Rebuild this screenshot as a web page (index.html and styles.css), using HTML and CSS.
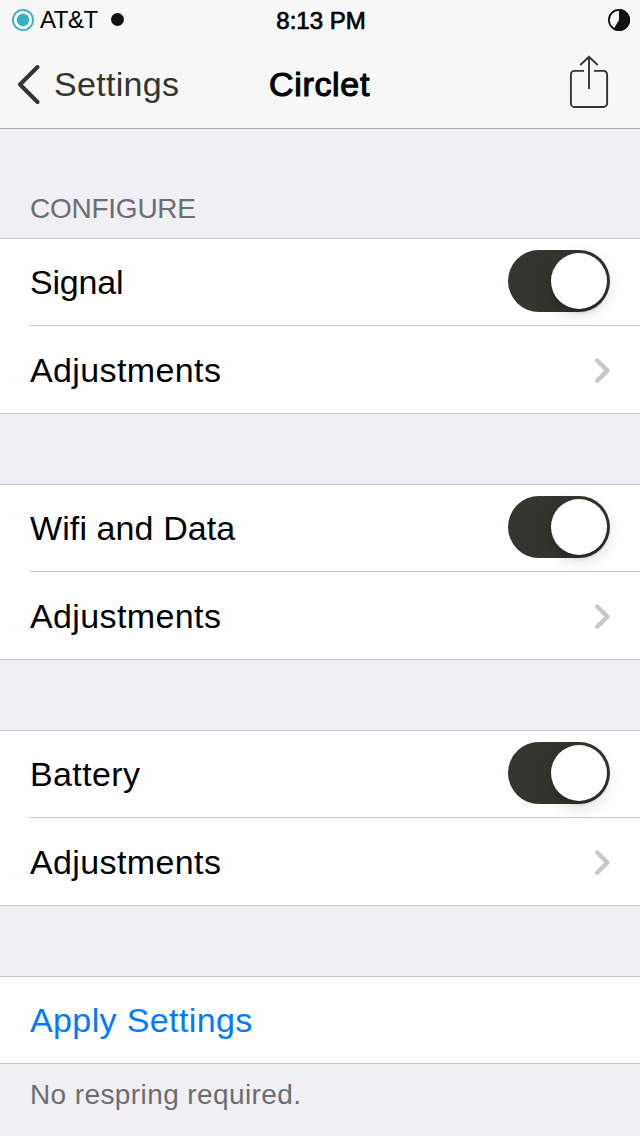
FILE: index.html
```html
<!DOCTYPE html>
<html lang="en">
<head>
<meta charset="utf-8">
<title>Circlet</title>
<link rel="stylesheet" href="styles.css">
</head>
<body>
<header class="top">
  <div class="status">
    <div class="carrier">
      <svg class="signal" width="24" height="24" viewBox="0 0 24 24"><circle cx="12" cy="12" r="10.1" fill="none" stroke="#34aec9" stroke-width="1.8"/><circle cx="12" cy="12" r="6.2" fill="#34aec9"/></svg>
      <span class="carrier-name">AT&amp;T</span>
      <span class="data-dot"></span>
    </div>
    <time class="clock">8:13 PM</time>
    <svg class="battery" width="24" height="24" viewBox="0 0 24 24"><circle cx="12" cy="12" r="10.1" fill="none" stroke="#111" stroke-width="1.8"/><path d="M12 1A11 11 0 1 1 6.300 21.400L12 12Z" fill="#111"/></svg>
  </div>
  <nav class="nav">
    <a class="back">
      <svg width="24" height="40" viewBox="0 0 24 40"><path d="M21.500 3L4 20.500L21.500 38" fill="none" stroke="#34352e" stroke-width="4" stroke-linecap="round" stroke-linejoin="round"/></svg>
      <span class="back-label">Settings</span>
    </a>
    <h1 class="title">Circlet</h1>
    <svg class="share" width="40" height="54" viewBox="0 0 40 54"><path d="M15 15.9H5.500A3.600 3.600 0 0 0 1.900 19.500V48.400A3.600 3.600 0 0 0 5.500 52H34.500A3.600 3.600 0 0 0 38.100 48.400V19.500A3.600 3.600 0 0 0 34.500 15.900H25M20 34V2M11.300 10L20 1.800L28.700 10" fill="none" stroke="#34352e" stroke-width="1.9"/></svg>
  </nav>
</header>
<main class="settings">
  <h2 class="heading">CONFIGURE</h2>
  <section class="group">
    <div class="row"><span class="signal-label">Signal</span><span class="switch"><span class="knob"></span></span></div>
    <div class="row link"><span class="adjust">Adjustments</span><svg class="chevron" width="16" height="26" viewBox="0 0 16 26"><path d="M3.200 2.500L13.400 12.600L3.200 22.700" fill="none" stroke="#c7c7cc" stroke-width="4.300" stroke-linecap="round" stroke-linejoin="round"/></svg></div>
  </section>
  <section class="group">
    <div class="row"><span class="wifi-label">Wifi and Data</span><span class="switch"><span class="knob"></span></span></div>
    <div class="row link"><span class="adjust">Adjustments</span><svg class="chevron" width="16" height="26" viewBox="0 0 16 26"><path d="M3.200 2.500L13.400 12.600L3.200 22.700" fill="none" stroke="#c7c7cc" stroke-width="4.300" stroke-linecap="round" stroke-linejoin="round"/></svg></div>
  </section>
  <section class="group">
    <div class="row"><span class="battery-label">Battery</span><span class="switch"><span class="knob"></span></span></div>
    <div class="row link"><span class="adjust">Adjustments</span><svg class="chevron" width="16" height="26" viewBox="0 0 16 26"><path d="M3.200 2.500L13.400 12.600L3.200 22.700" fill="none" stroke="#c7c7cc" stroke-width="4.300" stroke-linecap="round" stroke-linejoin="round"/></svg></div>
  </section>
  <section class="group">
    <div class="row apply">Apply Settings</div>
  </section>
  <p class="note">No respring required.</p>
</main>
</body>
</html>
```

FILE: styles.css
```css
* { box-sizing: border-box; }
body {
  margin: 0;
  height: 1136px;
  overflow: hidden;
  background: #efeff4;
  color: #000;
  font-family: "Liberation Sans", Arial, sans-serif;
  font-size: 34px;
}
svg { display: block; flex: none; }
.top {
  height: 129px;
  background: #f7f7f7;
  border-bottom: 1px solid #a9a9b0;
}
.status, .nav {
  display: grid;
  grid-template-columns: 1fr auto 1fr;
  align-items: center;
}
.status {
  height: 40px;
  padding: 0 9px 0 11px;
  font-size: 24px;
  line-height: 42px;
}
.carrier { display: flex; align-items: center; height: 40px; }
.carrier-name { margin-left: 5px; letter-spacing: -0.5px; }
.data-dot {
  width: 13px;
  height: 13px;
  margin: 0 0 1px 13px;
  border-radius: 50%;
  background: #111;
}
.clock {
  height: 40px;
  -webkit-text-stroke: 0.7px #000;
}
.battery { justify-self: end; }
.nav { height: 88px; padding: 0 31px 0 16px; }
.back {
  display: flex;
  align-items: center;
  color: #34352e;
  letter-spacing: 0.3px;
}
.back-label { margin-left: 14px; }
.title {
  margin: 0;
  font-size: 34px;
  font-weight: 400;
  letter-spacing: 0.7px;
  -webkit-text-stroke: 1.1px #000;
  transform: translateX(7px);
}
.share { justify-self: end; margin-bottom: 4px; }
.heading {
  height: 109px;
  margin: 0;
  padding: 64px 30px 0;
  color: #6d6d72;
  font-size: 28px;
  font-weight: 400;
  line-height: 32px;
  letter-spacing: -0.25px;
}
.group {
  margin-bottom: 70px;
  background: #fff;
  border-top: 1px solid #c8c7cc;
  border-bottom: 1px solid #c8c7cc;
}
.row {
  display: flex;
  align-items: center;
  justify-content: space-between;
  height: 86px;
  margin-left: 30px;
  padding-right: 30px;
  letter-spacing: 0.38px;
}
.signal-label { letter-spacing: -0.2px; }
.wifi-label { letter-spacing: 0.1px; }
.link { height: 88px; border-top: 1px solid #c8c7cc; padding-top: 2px; }
.switch {
  display: flex;
  justify-content: flex-end;
  width: 102px;
  height: 62px;
  margin-bottom: 2px;
  padding: 3px;
  border-radius: 31px;
  background: #34352e;
}
.knob {
  width: 56px;
  height: 56px;
  border-radius: 50%;
  background: #fff;
  box-shadow: 0 5px 16px rgba(0, 0, 0, 0.16), 0 3px 4px rgba(0, 0, 0, 0.15);
}
.apply { color: #007aff; }
.note {
  margin: -55px 30px 0;
  color: #6d6d72;
  font-size: 28px;
  line-height: 32px;
  letter-spacing: 0.4px;
}
```
